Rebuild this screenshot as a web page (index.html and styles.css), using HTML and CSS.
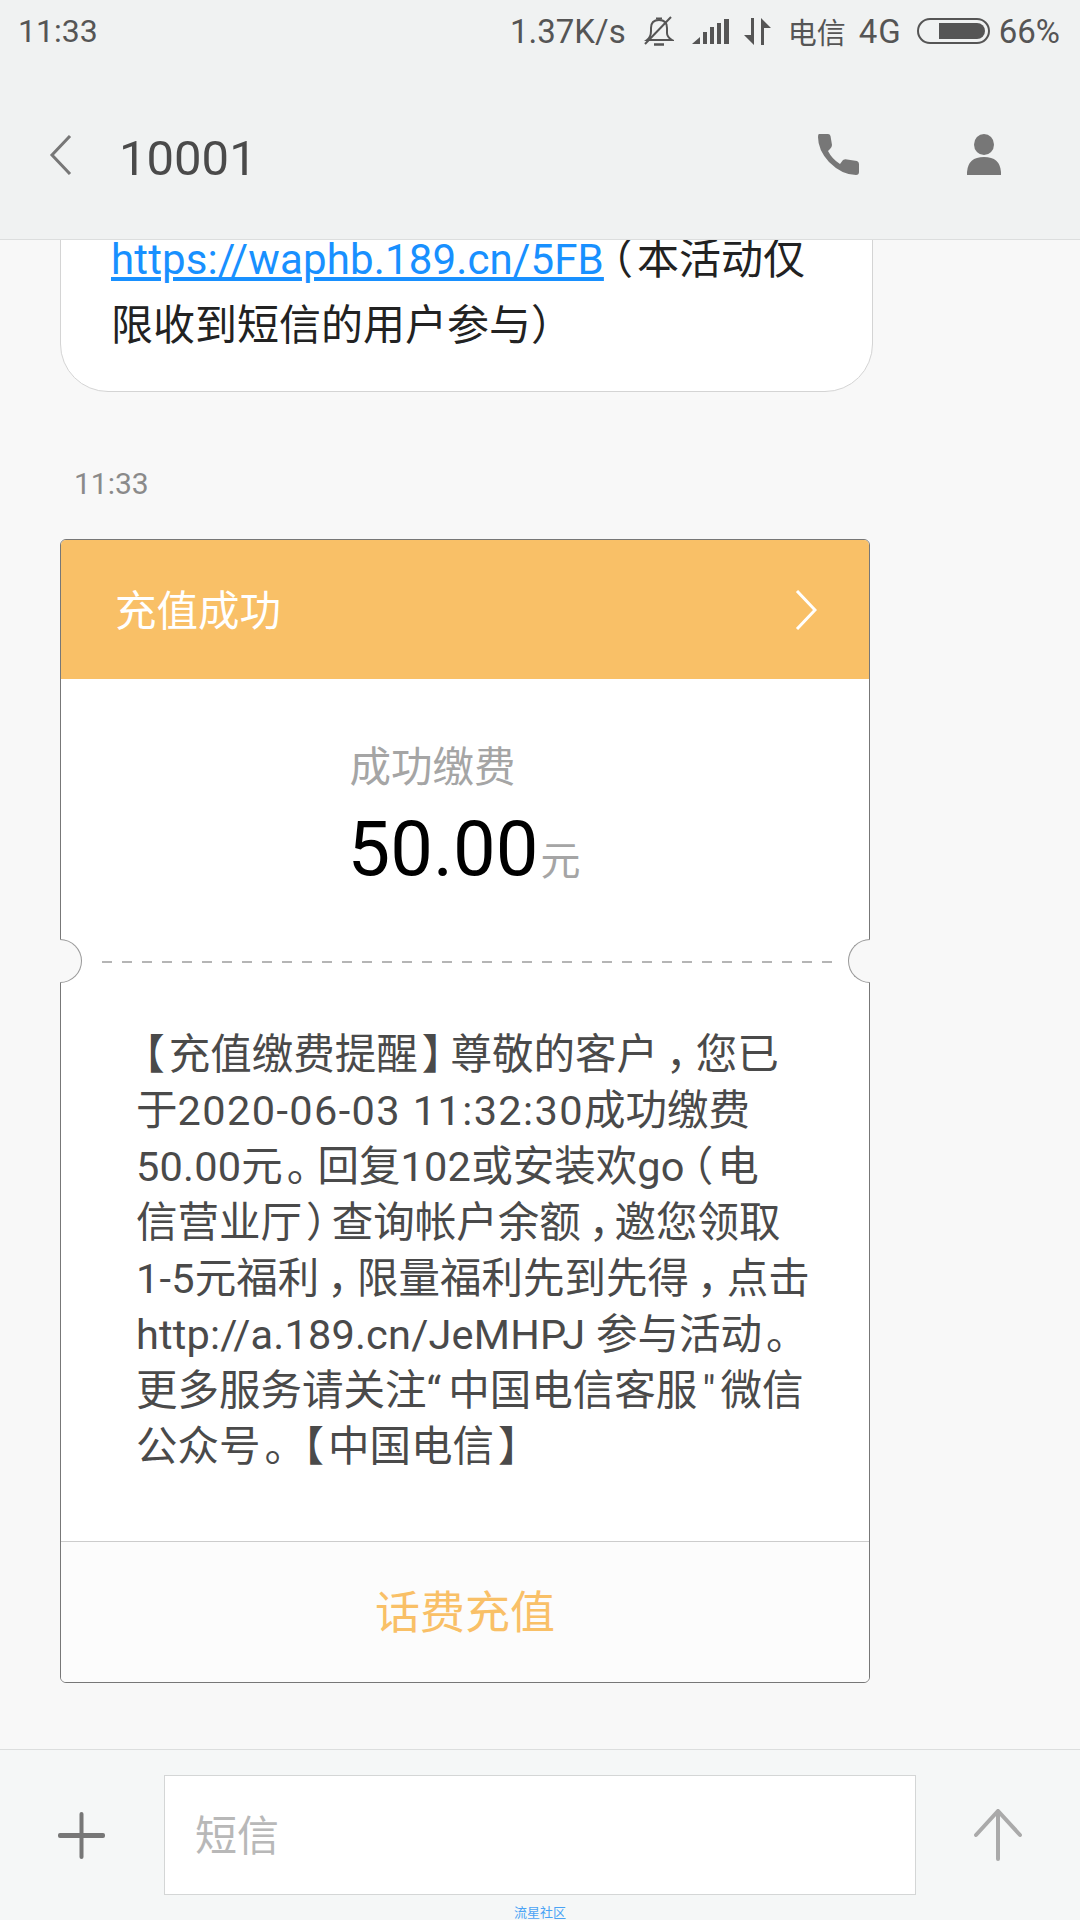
FILE: index.html
```html
<!DOCTYPE html>
<html lang="zh-CN">
<head>
    <meta charset="utf-8">
    <title>10001</title>
    <link rel="stylesheet" href="styles.css">
</head>
<body>
    <div class="phone">
        <div class="top">
            <div class="status">
                <span class="clock">11:33</span>
                <div class="status-right">
                    <span class="speed">1.37K/s</span>
                    <svg class="ic-bell" width="30" height="31" viewBox="0 0 30 31" fill="none" stroke="#555" stroke-width="2">
                        <path d="M3 24 Q7 21 7 15 L7 12 Q7 4 15 4 Q23 4 23 12 L23 17 Q23 21 28 24 Z"/>
                        <path d="M12 2.5 L18 2.5"/>
                        <path d="M10 28.5 L20 28.5" stroke-width="2.5"/>
                        <path d="M1 28 L27 1" stroke-width="2"/>
                    </svg>
                    <svg class="ic-signal" width="37" height="26" viewBox="0 0 37 26" fill="#555">
                        <path d="M0 26 L8 19 L8 26 Z"/>
                        <rect x="11" y="14" width="4" height="12"/>
                        <rect x="18" y="9" width="4" height="17"/>
                        <rect x="25" y="5" width="4" height="21"/>
                        <rect x="32" y="1" width="5" height="25"/>
                    </svg>
                    <svg class="ic-arrows" width="27" height="27" viewBox="0 0 27 27" fill="#555">
                        <path d="M7 0 H10 V27 L0 17 H7 Z"/>
                        <path d="M17 27 H20 V10 H27 L17 0 Z"/>
                    </svg>
                    <span class="carrier">电信</span>
                    <span class="net">4G</span>
                    <div class="battery"><div class="battery-fill"></div></div>
                    <span class="pct">66%</span>
                </div>
            </div>
            <div class="title-bar">
                <svg class="ic-back" width="24" height="40" viewBox="0 0 24 40" fill="none" stroke="#777" stroke-width="3">
                    <path d="M21 1 L3 20 L21 39"/>
                </svg>
                <span class="title">10001</span>
                <svg class="ic-call" width="42" height="42" viewBox="0 0 42 42" fill="#777">
                    <path d="M1 0 L10 0 Q12 0 12.5 2 L14 11 Q14 13 12 15 L10 17 Q14 25 22 30 L25 26 Q27 25 29 25.5 L39 27 Q41 28 41 30 L41 38 Q41 41 38 41 Q24 41 11 28 Q0 16 0 3 Q0 0 1 0 Z"/>
                </svg>
                <svg class="ic-person" width="34" height="42" viewBox="0 0 34 42" fill="#777">
                    <ellipse cx="17" cy="10.5" rx="10" ry="10.5"/>
                    <path d="M0 41 L0 38 Q1 23 17 23 Q33 23 34 38 L34 41 Z"/>
                </svg>
            </div>
        </div>

        <div class="messages">
            <div class="bubble">
                <div><a class="link">https://waphb.189.cn/5FB</a><span class="pl">（</span>本活动仅</div>
                <div>限收到短信的用户参与）</div>
            </div>

            <div class="msg-time">11:33</div>

            <div class="card">
                <div class="card-head">
                    <span class="head-text">充值成功</span>
                    <svg width="22" height="40" viewBox="0 0 22 40" fill="none" stroke="#fff" stroke-width="3">
                        <path d="M2 1 L20 20 L2 39"/>
                    </svg>
                </div>
                <div class="card-amount">
                    <div class="amount-group">
                        <div class="amount-label">成功缴费</div>
                        <div class="amount-row">
                            <span class="amount">50.00</span><span class="unit">元</span>
                        </div>
                    </div>
                </div>
                <div class="card-cut">
                    <div class="notch notch-left"></div>
                    <div class="notch notch-right"></div>
                </div>
                <div class="card-text">
                    <div><span class="pl">【</span>充值缴费提醒<span class="pr">】</span>尊敬的客户<span class="pc">，</span>您已</div>
                    <div>于<span class="lat lat-date">2020-06-03 11:32:30</span>成功缴费</div>
                    <div><span class="lat">50.00</span>元<span class="pd">。</span>回复<span class="lat">102</span>或安装欢<span class="lat">go</span><span class="pl">（</span>电</div>
                    <div class="line-tight">信营业厅<span class="pr">）</span>查询帐户余额<span class="pc">，</span>邀您领取</div>
                    <div><span class="lat">1-5</span>元福利<span class="pc">，</span>限量福利先到先得<span class="pc">，</span>点击</div>
                    <div><span class="lat">http://a.189.cn/JeMHPJ </span>参与活动<span class="pd">。</span></div>
                    <div>更多服务请关注<span class="q-open">“</span>中国电信客服<span class="q-close">"</span>微信</div>
                    <div>公众号<span class="pd">。</span><span class="pl">【</span>中国电信<span class="pr">】</span></div>
                </div>
                <div class="card-foot">话费充值</div>
            </div>
        </div>

        <div class="composer">
            <svg class="ic-plus" width="47" height="47" viewBox="0 0 47 47" fill="#777">
                <rect x="21.5" y="0" width="4" height="47" rx="2"/>
                <rect x="0" y="21" width="47" height="5" rx="2"/>
            </svg>
            <div class="input">短信</div>
            <svg class="ic-send" width="48" height="52" viewBox="0 0 48 52" fill="none" stroke="#aaa" stroke-width="4" stroke-linecap="round">
                <path d="M24 3 V50"/>
                <path d="M2 26 L24 2 L46 26"/>
            </svg>
        </div>
        <div class="watermark">流星社区</div>
    </div>
</body>
</html>
```

FILE: styles.css
```css
* {
    margin: 0;
    padding: 0;
    box-sizing: border-box;
}

body {
    width: 1080px;
    height: 1920px;
    overflow: hidden;
    font-family: Roboto, "Noto Sans CJK SC", sans-serif;
    background-color: #f8f8f8;
}

.phone {
    display: flex;
    flex-direction: column;
    width: 1080px;
    height: 1920px;
}

.top {
    height: 240px;
    flex-shrink: 0;
    background-color: #f0f2f2;
    border-bottom: 1px solid #dcdede;
}

.status {
    display: flex;
    justify-content: space-between;
    align-items: center;
    height: 62px;
    padding: 0 20px 0 18px;
    color: #555;
    font-size: 33px;
}

.clock {
    font-size: 32px;
}

.status-right {
    display: flex;
    align-items: center;
}

.ic-bell { margin-left: 18px; }
.ic-signal { margin-left: 18px; }
.ic-arrows { margin-left: 15px; }
.carrier { margin-left: 17px; font-size: 29px; }
.net { margin-left: 13px; letter-spacing: 1px; }
.battery { margin-left: 15px; }
.pct { margin-left: 9px; }

.battery {
    display: flex;
    justify-content: flex-end;
    width: 73px;
    height: 26px;
    padding: 3px;
    border: 2px solid #555;
    border-radius: 13px;
}

.battery-fill {
    width: 46px;
    height: 100%;
    background-color: #555;
    border-radius: 0 9px 9px 0;
}

.title-bar {
    display: flex;
    align-items: center;
    height: 177px;
    padding: 9px 0 0 49px;
}

.title {
    margin-left: 46px;
    padding-top: 7px;
    font-size: 49px;
    color: #4a4a4a;
}

.ic-call {
    margin-left: auto;
}

.ic-person {
    margin-left: 107px;
    margin-right: 79px;
}

.messages {
    flex: 1;
    min-height: 0;
    overflow: hidden;
    display: flex;
    flex-direction: column;
    justify-content: flex-end;
    padding: 0 0 66px 60px;
}

.bubble {
    flex-shrink: 0;
    width: 813px;
    padding: 0 40px 32px 50px;
    background-color: #fff;
    border: 1px solid #d4d4d4;
    border-radius: 0 0 48px 48px;
    font-size: 42px;
    line-height: 66px;
    color: #222;
    white-space: nowrap;
}

.link {
    color: #1890ff;
    letter-spacing: 0.15px;
    text-decoration: underline;
}

.msg-time {
    flex-shrink: 0;
    margin: 74px 0 0 14px;
    height: 73px;
    font-size: 30px;
    line-height: 36px;
    color: #8a8a8a;
}

.card {
    flex-shrink: 0;
    width: 810px;
    background-color: #fff;
    border: 1px solid #777;
    border-radius: 6px;
}

.card-head {
    display: flex;
    justify-content: space-between;
    align-items: center;
    height: 139px;
    padding: 0 52px 0 54px;
    background-color: #f9c067;
    color: #fff;
    font-size: 41.5px;
    border-radius: 5px 5px 0 0;
}

.head-text {
    padding-bottom: 4px;
}

.card-amount {
    display: flex;
    justify-content: center;
    height: 282px;
    padding-top: 61px;
}

.amount-label {
    font-size: 41.5px;
    line-height: 56px;
    color: #a5a5a5;
}

.amount-row {
    display: flex;
    align-items: baseline;
    margin: 3px 0 0 -2px;
}

.amount {
    font-size: 76px;
    line-height: 100px;
    color: #000;
}

.unit {
    margin-left: 2px;
    font-size: 40px;
    color: #a5a5a5;
}

.card-cut {
    position: relative;
    height: 2px;
    margin: 0 37px 0 41px;
    background-image: repeating-linear-gradient(to right, #b5b5b5 0, #b5b5b5 10px, transparent 10px, transparent 20px);
}

.notch {
    position: absolute;
    top: -22px;
    width: 22px;
    height: 44px;
    background-color: #f8f8f8;
    border: 1.5px solid #999;
}

.notch-left {
    left: -42px;
    border-left: none;
    border-radius: 0 22px 22px 0;
}

.notch-right {
    right: -38px;
    border-right: none;
    border-radius: 22px 0 0 22px;
}

.card-text {
    height: 578px;
    padding: 64px 0 0 75px;
    font-size: 41.5px;
    line-height: 56px;
    color: #4a4a4a;
    white-space: nowrap;
}

.lat {
    letter-spacing: 0.2px;
}

.lat-date {
    letter-spacing: 1.4px;
}

/* half width punctuation, then spaced out by hand like the original */
.pl, .pr, .pc, .pd {
    font-feature-settings: "halt";
}

.pl { margin: 0 4px 0 8px; }
.pr { margin: 0 8px 0 4px; }
.pc { margin: 0 9px 0 8px; }
.pd { margin: 0 10px 0 4px; }

.line-tight .pr { margin-right: 5px; }
.line-tight .pc { margin-right: 5px; }

.q-open { margin-right: 7px; }
.q-close { margin: 0 5px; }

.card-foot {
    height: 141px;
    background-color: #fcfcfc;
    border-top: 1px solid #ccc;
    border-radius: 0 0 5px 5px;
    font-size: 45px;
    line-height: 143px;
    text-align: center;
    color: #f9c067;
}

.composer {
    display: flex;
    align-items: center;
    height: 146px;
    flex-shrink: 0;
    padding: 25px 0 0 58px;
    background-color: #f5f7f7;
    border-top: 1px solid #dcdede;
}

.input {
    width: 752px;
    height: 120px;
    margin-left: 59px;
    padding-left: 30px;
    background-color: #fff;
    border: 1px solid #d4d6d6;
    font-size: 42px;
    line-height: 122px;
    color: #b8b8b8;
}

.ic-send {
    margin-left: 58px;
}

.watermark {
    height: 25px;
    flex-shrink: 0;
    background-color: #f5f7f7;
    font-size: 13px;
    line-height: 36px;
    text-align: center;
    color: #4aa3f5;
}
```
